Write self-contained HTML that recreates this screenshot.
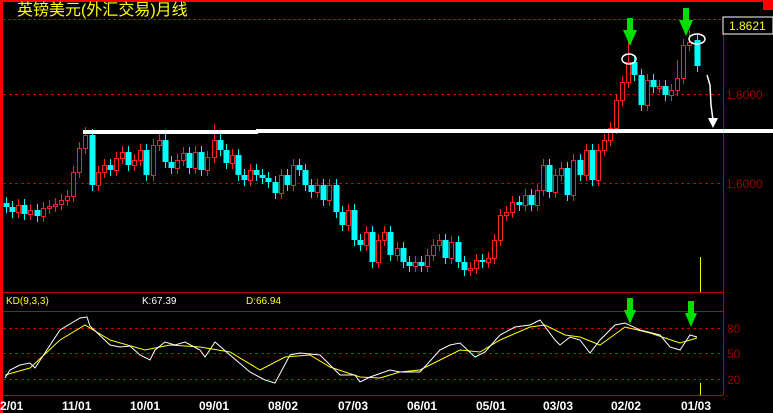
<!DOCTYPE html>
<html><head><meta charset="utf-8"><style>
html,body{margin:0;padding:0;background:#000;width:773px;height:413px;overflow:hidden}
svg{display:block}
text{font-family:"Liberation Sans","Noto Sans CJK SC",sans-serif}
</style></head><body>
<svg width="773" height="413" viewBox="0 0 773 413" xmlns="http://www.w3.org/2000/svg">
<rect width="773" height="413" fill="#000"/>
<g stroke="#c00000" stroke-width="1">
<line x1="3" y1="19.5" x2="723" y2="19.5" stroke-dasharray="3,2"/>
<line x1="3" y1="94.5" x2="723" y2="94.5" stroke-dasharray="3,3"/>
<line x1="3" y1="183.5" x2="723" y2="183.5" stroke-dasharray="3,3"/>
<line x1="723.5" y1="19" x2="723.5" y2="395"/>
<line x1="3" y1="292.5" x2="723" y2="292.5"/>
<line x1="3" y1="311.5" x2="723" y2="311.5"/>
<line x1="3" y1="328.5" x2="723" y2="328.5" stroke-dasharray="3,3"/>
<line x1="3" y1="353.5" x2="723" y2="353.5" stroke-dasharray="3,3"/>
<line x1="3" y1="379.5" x2="723" y2="379.5" stroke-dasharray="3,3"/>
<line x1="3" y1="395.5" x2="723" y2="395.5"/>
</g>
<rect x="0" y="0" width="773" height="2" fill="#f00"/>
<rect x="0" y="0" width="3" height="413" fill="#f00"/>
<rect x="763" y="0" width="10" height="10" fill="#f00"/>

<g fill="#00ffff" stroke="#00ffff">
<path fill="none" d="M6.5 197V213M12.5 201V218M24.5 199V220M37.5 204V222M92.5 129V191M110.5 159V176M128.5 146V171M146.5 144V181M165.5 134V168M171.5 156V174M189.5 147V174M201.5 146V176M220.5 134V156M226.5 144V169M238.5 149V181M244.5 169V186M256.5 164V181M262.5 169V184M268.5 172V188M275.5 176V199M287.5 169V191M299.5 159V176M305.5 164V191M311.5 179V198M323.5 179V206M336.5 179V218M342.5 206V231M354.5 204V246M360.5 234V251M372.5 226V268M390.5 226V261M403.5 242V268M409.5 256V272M421.5 256V272M445.5 234V264M458.5 236V268M464.5 256V276M482.5 254V268M519.5 196V211M531.5 189V211M549.5 159V198M567.5 162V201M580.5 154V181M592.5 144V186M634.5 56V81M641.5 69V111M653.5 74V93M665.5 80V101M697.5 34V72"/>
<g stroke="none">
<rect x="3.5" y="203" width="6" height="4"/><rect x="9.5" y="207" width="6" height="5"/><rect x="21.5" y="205" width="6" height="9"/><rect x="34.5" y="210" width="6" height="6"/>
<rect x="89.5" y="135" width="6" height="50"/><rect x="107.5" y="165" width="6" height="5"/><rect x="125.5" y="152" width="6" height="13"/><rect x="143.5" y="150" width="6" height="25"/>
<rect x="162.5" y="140" width="6" height="22"/><rect x="168.5" y="162" width="6" height="6"/><rect x="186.5" y="153" width="6" height="15"/><rect x="198.5" y="152" width="6" height="18"/>
<rect x="217.5" y="140" width="6" height="10"/><rect x="223.5" y="150" width="6" height="13"/><rect x="235.5" y="155" width="6" height="20"/><rect x="241.5" y="175" width="6" height="5"/>
<rect x="253.5" y="170" width="6" height="5"/><rect x="259.5" y="175" width="6" height="3"/><rect x="265.5" y="178" width="6" height="4"/><rect x="272.5" y="182" width="6" height="11"/>
<rect x="284.5" y="175" width="6" height="10"/><rect x="296.5" y="165" width="6" height="5"/><rect x="302.5" y="170" width="6" height="15"/><rect x="308.5" y="185" width="6" height="7"/>
<rect x="320.5" y="185" width="6" height="15"/><rect x="333.5" y="185" width="6" height="27"/><rect x="339.5" y="212" width="6" height="13"/><rect x="351.5" y="210" width="6" height="30"/>
<rect x="357.5" y="240" width="6" height="5"/><rect x="369.5" y="232" width="6" height="30"/><rect x="387.5" y="232" width="6" height="23"/><rect x="400.5" y="248" width="6" height="14"/>
<rect x="406.5" y="262" width="6" height="4"/><rect x="418.5" y="262" width="6" height="4"/><rect x="442.5" y="240" width="6" height="18"/><rect x="455.5" y="242" width="6" height="20"/>
<rect x="461.5" y="262" width="6" height="8"/><rect x="479.5" y="260" width="6" height="2"/><rect x="516.5" y="202" width="6" height="3"/><rect x="528.5" y="195" width="6" height="10"/>
<rect x="546.5" y="165" width="6" height="27"/><rect x="564.5" y="168" width="6" height="27"/><rect x="577.5" y="160" width="6" height="15"/><rect x="589.5" y="150" width="6" height="30"/>
<rect x="631.5" y="62" width="6" height="13"/><rect x="638.5" y="75" width="6" height="30"/><rect x="650.5" y="80" width="6" height="7"/><rect x="662.5" y="86" width="6" height="9"/>
<rect x="694.5" y="40" width="6" height="26"/>
</g>
</g>
<g fill="#000" stroke="#ff2020" stroke-width="1">
<path d="M18.5 199V218M30.5 204V220M43.5 202V222M49.5 200V214M55.5 198V212M61.5 194V210M67.5 190V206M73.5 166V202M79.5 142V178M85.5 127V154M98.5 166V191M104.5 159V178M116.5 152V176M122.5 146V164M134.5 154V171M140.5 144V166M153.5 139V181M159.5 134V151M177.5 154V174M183.5 147V166M195.5 146V174M207.5 151V176M214.5 124V163M232.5 149V169M250.5 164V186M281.5 169V199M293.5 159V191M317.5 179V198M329.5 179V206M348.5 204V231M366.5 226V251M378.5 234V268M384.5 226V246M397.5 242V261M415.5 256V272M427.5 249V272M433.5 239V261M439.5 234V251M451.5 236V264M470.5 262V276M476.5 254V274M488.5 252V268M494.5 234V264M500.5 209V246M506.5 206V221M512.5 196V218M525.5 189V211M537.5 184V211M543.5 159V196M555.5 169V198M561.5 162V181M573.5 154V201M586.5 144V181M598.5 144V186M604.5 134V156M610.5 122V146M616.5 94V134M622.5 76V106M628.5 40V88M647.5 74V111M659.5 80V93M671.5 84V101M677.5 60V96M683.5 39V84M689.5 30V51"/>
<rect x="16.5" y="205.5" width="4" height="7"/><rect x="28.5" y="210.5" width="4" height="4"/><rect x="41.5" y="208.5" width="4" height="8"/><rect x="47.5" y="206.5" width="4" height="2"/>
<rect x="53.5" y="204.5" width="4" height="2"/><rect x="59.5" y="200.5" width="4" height="4"/><rect x="65.5" y="196.5" width="4" height="4"/><rect x="71.5" y="172.5" width="4" height="24"/>
<rect x="77.5" y="148.5" width="4" height="24"/><rect x="83.5" y="135.5" width="4" height="13"/><rect x="96.5" y="172.5" width="4" height="13"/><rect x="102.5" y="165.5" width="4" height="7"/>
<rect x="114.5" y="158.5" width="4" height="12"/><rect x="120.5" y="152.5" width="4" height="6"/><rect x="132.5" y="160.5" width="4" height="5"/><rect x="138.5" y="150.5" width="4" height="10"/>
<rect x="151.5" y="145.5" width="4" height="30"/><rect x="157.5" y="140.5" width="4" height="5"/><rect x="175.5" y="160.5" width="4" height="8"/><rect x="181.5" y="153.5" width="4" height="7"/>
<rect x="193.5" y="152.5" width="4" height="16"/><rect x="205.5" y="157.5" width="4" height="13"/><rect x="212.5" y="140.5" width="4" height="17"/><rect x="230.5" y="155.5" width="4" height="8"/>
<rect x="248.5" y="170.5" width="4" height="10"/><rect x="279.5" y="175.5" width="4" height="18"/><rect x="291.5" y="165.5" width="4" height="20"/><rect x="315.5" y="185.5" width="4" height="7"/>
<rect x="327.5" y="185.5" width="4" height="15"/><rect x="346.5" y="210.5" width="4" height="15"/><rect x="364.5" y="232.5" width="4" height="13"/><rect x="376.5" y="240.5" width="4" height="22"/>
<rect x="382.5" y="232.5" width="4" height="8"/><rect x="395.5" y="248.5" width="4" height="7"/><rect x="413.5" y="262.5" width="4" height="4"/><rect x="425.5" y="255.5" width="4" height="11"/>
<rect x="431.5" y="245.5" width="4" height="10"/><rect x="437.5" y="240.5" width="4" height="5"/><rect x="449.5" y="242.5" width="4" height="16"/><rect x="468.5" y="268.5" width="4" height="2"/>
<rect x="474.5" y="260.5" width="4" height="8"/><rect x="486.5" y="258.5" width="4" height="4"/><rect x="492.5" y="240.5" width="4" height="18"/><rect x="498.5" y="215.5" width="4" height="25"/>
<rect x="504.5" y="212.5" width="4" height="3"/><rect x="510.5" y="202.5" width="4" height="10"/><rect x="523.5" y="195.5" width="4" height="10"/><rect x="535.5" y="190.5" width="4" height="15"/>
<rect x="541.5" y="165.5" width="4" height="25"/><rect x="553.5" y="175.5" width="4" height="17"/><rect x="559.5" y="168.5" width="4" height="7"/><rect x="571.5" y="160.5" width="4" height="35"/>
<rect x="584.5" y="150.5" width="4" height="25"/><rect x="596.5" y="150.5" width="4" height="30"/><rect x="602.5" y="140.5" width="4" height="10"/><rect x="608.5" y="128.5" width="4" height="12"/>
<rect x="614.5" y="100.5" width="4" height="28"/><rect x="620.5" y="82.5" width="4" height="18"/><rect x="626.5" y="62.5" width="4" height="20"/><rect x="645.5" y="80.5" width="4" height="25"/>
<rect x="657.5" y="86.5" width="4" height="2"/><rect x="669.5" y="90.5" width="4" height="5"/><rect x="675.5" y="78.5" width="4" height="12"/><rect x="681.5" y="45.5" width="4" height="33"/>
<rect x="687.5" y="42.5" width="4" height="3"/>
</g>

<rect x="83" y="130" width="175" height="4" fill="#fff"/>
<rect x="256" y="129" width="517" height="4" fill="#fff"/>
<rect x="723" y="17" width="50" height="17" fill="#000" stroke="#fff" stroke-width="1"/>
<text x="729" y="30" font-size="12" fill="#ff0">1.8621</text>
<g font-size="12" fill="#a00000">
<text x="726" y="99">1.8000</text>
<text x="726" y="188">1.6000</text>
<text x="727" y="333">80</text>
<text x="727" y="358">50</text>
<text x="727" y="384">20</text>
</g>
<text x="17" y="15" font-size="16" fill="#ff0">英镑美元(外汇交易)月线</text>
<line x1="700.5" y1="257" x2="700.5" y2="292" stroke="#ff0"/>
<line x1="700.5" y1="383" x2="700.5" y2="395" stroke="#ff0"/>
<text x="6" y="304" font-size="10" fill="#ff0">KD(9,3,3)</text>
<text x="142" y="304" font-size="10" fill="#fff">K:67.39</text>
<text x="246" y="304" font-size="10" fill="#ff0">D:66.94</text>
<polyline fill="none" stroke="#ff0" stroke-width="1" points="5,375 30,368 60,340 85,325 110,340 145,350 170,345 200,347 230,352 260,370 285,357 310,355 330,367 360,377 380,378 400,372 420,370 440,360 460,350 480,352 500,340 530,327 545,325 565,335 580,337 600,345 625,327 650,333 680,343 697,338"/>
<polyline fill="none" stroke="#fff" stroke-width="1" points="5,378 10,370 20,365 30,363 35,368 60,330 80,318 87,317 90,326 110,345 120,347 130,346 140,355 150,360 155,350 165,342 175,345 185,342 200,350 205,357 215,342 230,355 250,372 265,380 275,383 290,355 300,353 320,355 340,375 355,375 360,382 370,377 390,370 400,372 420,372 440,350 450,345 460,343 475,357 485,352 500,335 515,327 530,325 540,320 555,340 560,345 570,337 580,340 590,353 600,340 615,325 625,323 640,330 660,335 670,347 680,350 690,335 697,337"/>
<g fill="#00e000">
<polygon points="627,18 633,18 633,30 637,30 630,46 623,30 627,30"/>
<polygon points="683,8 689,8 689,20 693,20 686,36 679,20 683,20"/>
<polygon points="627,298 633,298 633,310 636,310 630,324 624,310 627,310"/>
<polygon points="688,301 694,301 694,313 697,313 691,327 685,313 688,313"/>
</g>
<ellipse cx="629" cy="59" rx="7" ry="5" fill="none" stroke="#fff" stroke-width="1.5"/>
<ellipse cx="697" cy="39" rx="8" ry="5" fill="none" stroke="#fff" stroke-width="1.5"/>
<path d="M707,75 L710,85 L711,105 L713,120" fill="none" stroke="#fff" stroke-width="1.5"/>
<polygon points="708,118 718,118 713,128" fill="#fff"/>
<g font-size="12" font-weight="bold" fill="#fff">
<text x="0" y="410">2/01</text>
<text x="62" y="410">11/01</text>
<text x="130" y="410">10/01</text>
<text x="199" y="410">09/01</text>
<text x="268" y="410">08/02</text>
<text x="338" y="410">07/03</text>
<text x="407" y="410">06/01</text>
<text x="476" y="410">05/01</text>
<text x="543" y="410">03/03</text>
<text x="611" y="410">02/02</text>
<text x="681" y="410">01/03</text>
</g>
</svg>
</body></html>
